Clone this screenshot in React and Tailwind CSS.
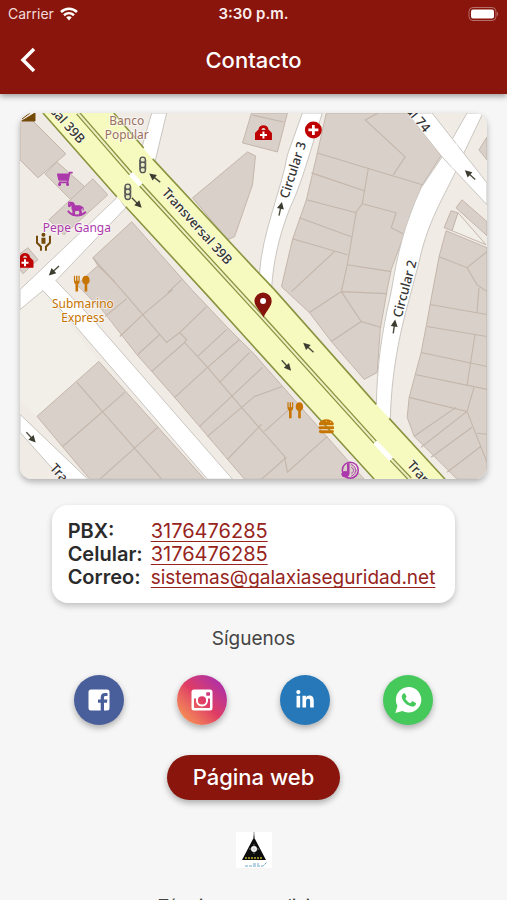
import { FaHamburger, FaHorse, FaLinkedinIn, FaShoppingCart } from 'react-icons/fa';

const buildings = [
  '20,121 30,118 66,154 38,178 20,160',
  '57,162 85,187 72,201 45,174',
  '93,179 108,195 64,235 49,220',
  '20,254 28,248 38,260 23,274 20,270',
  '248,152 256,156 253,185 235,237 228,240 193,198',
  '252,113 288,113 278,152 243,143',
  '132,222 192,290 228,328 255,355 365,480 245,480 175,398 137,355 102,310 77,285 98,266 93,258',
  '99,362 37,417 90,480 205,480',
  '327,113 410,113 442,156 423,185 392,270 388,290 381,330 378,373 365,380 332,342 310,313 282,287 293,240 307,200 318,153',
  '447,231 488,248 488,480 458,480 415,437 408,418 410,398 422,353 427,327 433,294 440,257',
  '463,200 488,222 488,236 457,208',
  '452,211 459,213 453,231 445,228',
  '488,137 480,150 488,160',
];

const walls = [
  'M253 115 284 122',
  // block south of the avenue
  'M93 258 125 294 143 315 167 343 180 333 187 340 185 343 208 368 242 408 285 457 288 473 328 437',
  'M173 290 143 315 120 337M127 299 105 317M182 280 168 293M160 335 138 355M185 343 152 372M207 307 180 333',
  'M227 330 198 357M240 340 208 368 175 398M250 353 220 383M263 368 200 427M283 387 255 397 208 437',
  'M292 408 265 432M262 425 228 460M287 458 262 480M98 266 115 282',
  'M77 383 162 480M125 393 63 447M158 428 100 480',
  // block between the two circulares
  'M379 113 366 120 406 157 394 175M318 153 423 185M369 169 363 204 357 212 348 265 342 292',
  'M312 173 365 191M307 200 357 213M300 218 352 237M293 239 348 255M335 252 292 292',
  'M363 204 397 213 392 228 404 234M348 265 392 272M388 294 342 292 310 313M342 292 362 322 382 328M362 322 332 342',
  // east block
  'M440 257 468 268 488 252M468 268 478 285 488 292M431 305 488 315M428 327 488 337M422 353 488 367M416 375 488 390',
  'M410 398 468 412 488 463M476 335 468 386M475 388 468 412M415 437 457 408M422 448 468 412M432 458 473 428M448 473 482 447M480 288 478 313M478 434 488 435',
];

const streets = [
  'M118 197 20 290V310L43 291 70 320 208 480H233L95 322 56 281 126 208Z',
  'M20 415 88 480H62L20 433Z',
  'M152 113H167L155 163 142 148Z',
  'M303 113H323C311 150 302 185 291 207C280 235 274 260 272 290L260 274C262 235 282 190 288 155Z',
  'M468 113H484L463 157C450 190 430 215 420 262L410 300C400 335 392 375 391 422L377 407C378 365 382 335 392 292C398 255 405 225 422 188L443 157Z',
  'M408 113H433L488 183V205L443 157Z',
];

const arrows = [
  { x: 137, y: 203, angle: 45 },
  { x: 155, y: 178, angle: 218 },
  { x: 54, y: 271, angle: 137 },
  { x: 281, y: 209, angle: -78 },
  { x: 471, y: 175, angle: 222 },
  { x: 31, y: 438, angle: 48 },
  { x: 309, y: 348, angle: 222 },
  { x: 287, y: 366, angle: 48 },
  { x: 395, y: 327, angle: -82 },
];

const streetNames = [
  { text: 'Transversal 39B', x: 198, y: 226, angle: 48, anchor: 'middle' },
  { text: 'sal 39B', x: 83, y: 141, angle: 48, anchor: 'end' },
  { text: 'Tran', x: 411, y: 463, angle: 48, anchor: 'start' },
  { text: 'Tra', x: 53, y: 466, angle: 48, anchor: 'start' },
  { text: 'Circular 3', x: 293, y: 170, angle: -72, anchor: 'middle' },
  { text: 'Circular 2', x: 405, y: 289, angle: -75, anchor: 'middle' },
  { text: 'al 74', x: 429, y: 130, angle: 50, anchor: 'end' },
];

function TrafficLight({ x, y }) {
  return (
    <g transform={`translate(${x} ${y})`} fill="#e9ecc0" stroke="#555" strokeWidth="1.3">
      <circle cy="-5" r="2.7" />
      <circle cy="5" r="2.7" />
      <circle r="2.7" />
      <path d="M-3 -5V5M3 -5V5" strokeWidth="1" />
    </g>
  );
}

function Restaurant({ x, y }) {
  return (
    <g transform={`translate(${x} ${y})`} fill="#c77400">
      <path d="M-8 -8H-6.8V-3H-5.8V-8H-4.4V-3H-3.4V-8H-2.2V-3C-2.2 -1 -3 0 -3.8 .5V8H-6.4V.5C-7.2 0 -8 -1 -8 -3Z" />
      <path d="M4 -8C6.4 -8 7.8 -6 7.8 -3.5C7.8 -1.4 6.8 0 5.4 .7V8H2.8V.7C1.2 0 .3 -1.4 .3 -3.5C.3 -6 1.6 -8 4 -8Z" />
    </g>
  );
}

function MedicalKit({ x, y }) {
  return (
    <g transform={`translate(${x} ${y})`}>
      <path d="M-8.5 7V0L-5 -3.5C-4.5 -9 4.5 -9 5 -3.5L8.5 0V7Z" fill="#bf0000" />
      <path d="M-2 -3C-1.5 -5.5 1.5 -5.5 2 -3Z" fill="#d9d0c9" />
      <path d="M0 -1.5V5.5M-3.5 2H3.5" stroke="#fff" strokeWidth="2" />
    </g>
  );
}

function LocationMap() {
  return (
    <svg
      viewBox="20 113 468 367"
      role="img"
      aria-label="Mapa"
      className="block w-full rounded-xl shadow-[0_3px_6px_rgba(0,0,0,0.28)]"
    >
      <rect x="20" y="113" width="468" height="367" fill="#f0ebe5" />
      <path d="M20 305 43 292 99 362 37 417 20 400Z" fill="#f2efe9" />
      <g fill="#d9d0c9" stroke="#c4b6ab" strokeWidth="1">
        {buildings.map((points) => <polygon key={points} points={points} />)}
      </g>
      <path d="M459 213 487 245 453 231Z" fill="#f2efe9" stroke="#c4b6ab" />
      <g fill="none" stroke="#c4b6ab" strokeWidth="1.1">
        {walls.map((d) => <path key={d} d={d} />)}
      </g>
      <g fill="#fff" stroke="#c9c5c0" strokeWidth="1">
        {streets.map((d) => <path key={d} d={d} />)}
      </g>
      <path d="M446 154 457 143 465 158 454 169Z" fill="#fff" />

      {/* avenue */}
      <path d="M43 113 117 197 207 295 255 348 375 480H446L390 419 377 405 275 290 255 269 152 158 114 113Z" fill="#f7fabf" />
      <g fill="none" stroke="#8b9440" strokeWidth="1.6">
        <path d="M43 113 117 197M126 207 207 295 255 348 375 480" />
        <path d="M114 113 144 148M153 159 255 269 275 290 377 405M390 419 446 480" />
      </g>
      <g fill="none">
        <path d="M78 113 131 174M141 185 264 319 376 443M392 460 411 480" stroke="#8b9440" strokeWidth="4.6" />
        <path d="M78 113 131 174M141 185 264 319 376 443M392 460 411 480" stroke="#eef0c4" strokeWidth="2" />
        <path d="M131 174 141 185M376 443 392 460" stroke="#fff" strokeWidth="5" />
      </g>

      {arrows.map((arrow) => (
        <g key={`${arrow.x}-${arrow.y}`} transform={`translate(${arrow.x} ${arrow.y}) rotate(${arrow.angle})`}>
          <path d="M-7 0H2" stroke="#4b4b3c" strokeWidth="1.4" />
          <path d="M0 -3.5 7 0 0 3.5Z" fill="#3c3c30" />
        </g>
      ))}
      <TrafficLight x={143} y={165} />
      <TrafficLight x={128} y={192} />

      <g fontFamily='"Noto Sans", sans-serif' fontSize="13" fontWeight="500" fill="#333" stroke="#fff" strokeOpacity="0.5" strokeWidth="2" paintOrder="stroke">
        {streetNames.map((s) => (
          <text
            key={`${s.x}-${s.y}`}
            textAnchor={s.anchor}
            dominantBaseline="central"
            transform={`translate(${s.x} ${s.y}) rotate(${s.angle})`}
          >
            {s.text}
          </text>
        ))}
      </g>
      <g fontFamily='"Noto Sans", sans-serif' fontSize="12" textAnchor="middle" stroke="#fff" strokeOpacity="0.6" strokeWidth="2" paintOrder="stroke">
        <text x="127" y="125" fill="#9a7060">Banco</text>
        <text x="127" y="139" fill="#9a7060">Popular</text>
        <text x="77" y="232" fill="#ac39ac">Pepe Ganga</text>
        <text x="83" y="308" fill="#c77400">Submarino</text>
        <text x="83" y="322" fill="#c77400">Express</text>
      </g>

      {/* places */}
      <path d="M22 121 35 113V121ZM22 119 30 113" fill="#734a08" stroke="#734a08" />
      <g transform="translate(128 0) scale(-1 1)">
        <FaShoppingCart x="55" y="171" width="18" height="17" color="#ac39ac" />
      </g>
      <g transform="translate(154 0) scale(-1 1)">
        <FaHorse x="70" y="201" width="14" height="13" color="#ac39ac" />
      </g>
      <path d="M68 211C72 217 81 217 86 212" fill="none" stroke="#ac39ac" strokeWidth="2" />
      <g fill="none" stroke="#734a08" strokeWidth="2">
        <path d="M37 236V243L41 247V251M50 236V243L46 247V251" />
        <path d="M43.5 238V244" strokeWidth="4" />
        <circle cx="43.5" cy="235" r="1" />
      </g>
      <MedicalKit x={25} y={261} />
      <MedicalKit x={264} y={133} />
      <circle cx="314" cy="130" r="8.5" fill="#bf0000" />
      <path d="M314 125V135M309 130H319" stroke="#fff" strokeWidth="2.8" />
      <Restaurant x={82} y={284} />
      <Restaurant x={296} y={411} />
      <FaHamburger x="319" y="419" width="16" height="16" color="#c77400" />
      <g stroke="#ac39ac" fill="none">
        <circle cx="351" cy="471" r="8" strokeWidth="1.5" />
        <path d="M349 464V475" strokeWidth="2.5" />
        <path d="M352 465C358 468 358 474 352 477M352 468C355 470 355 473 352 474" />
        <ellipse cx="346" cy="475" rx="3.5" ry="2.8" fill="#ac39ac" />
      </g>

      <path d="M264 318C261 311 255 307 255 301.5A8.6 8.6 0 0 1 272.2 301.5C272.2 307 267 311 264 318Z" fill="#85120b" />
      <circle cx="263.6" cy="301.5" r="3" fill="#fff" />
    </svg>
  );
}

function FacebookIcon() {
  return (
    <svg viewBox="0 0 24 24" className="size-6" aria-hidden="true">
      <path
        d="M4 1.5H20A2.5 2.5 0 0 1 22.5 4V20A2.5 2.5 0 0 1 20 22.5H17V14.7H20L20.4 11.5H17V9.6C17 8.6 17.4 8.1 18.6 8.1H20.5V5.1C20 5 19.2 5 18 5C15.3 5 13.7 6.5 13.7 9.2V11.5H11V14.7H13.7V22.5H4A2.5 2.5 0 0 1 1.5 20V4A2.5 2.5 0 0 1 4 1.5Z"
        fill="#fff"
      />
    </svg>
  );
}

function InstagramIcon() {
  return (
    <svg viewBox="0 0 24 24" className="size-6" fill="none" aria-hidden="true">
      <path
        fillRule="evenodd"
        d="M4 1.5H20A2.5 2.5 0 0 1 22.5 4V20A2.5 2.5 0 0 1 20 22.5H4A2.5 2.5 0 0 1 1.5 20V4A2.5 2.5 0 0 1 4 1.5ZM4 10.5V19.2Q4 20 4.8 20H19.2Q20 20 20 19.2V10.5H17.9A6.2 6.2 0 1 1 6.1 10.5ZM17 4.2Q16.2 4.2 16.2 5V7Q16.2 7.8 17 7.8H19.2Q20 7.8 20 7V5Q20 4.2 19.2 4.2ZM12 8.3A4.1 4.1 0 1 0 12 16.5A4.1 4.1 0 1 0 12 8.3Z"
        fill="#fff"
      />
    </svg>
  );
}

function WhatsappIcon() {
  return (
    <svg viewBox="0 0 26 26" className="size-7" aria-hidden="true">
      <path d="M13.5 1A11.8 11.8 0 1 1 7.8 23.1L1.2 25L3.2 18.6A11.8 11.8 0 0 1 13.5 1Z" fill="#fff" />
      <path
        d="M8.8 7C9.4 6.5 10.1 6.6 10.4 7.2L11.5 9.7C11.7 10.2 11.5 10.6 10.5 11.7C11.5 13.7 13 15.2 15.2 16.1L16.6 14.5C16.9 14.2 17.2 14.2 17.6 14.4L20 15.6C20.5 15.9 20.5 16.2 20.3 17C19.9 18.6 18.2 19.3 16.6 19.1C12.2 18.3 8.2 14.5 7.3 10.7C7 9.2 7.8 7.8 8.8 7Z"
        fill="#45c95b"
      />
    </svg>
  );
}

const contacts = [
  { label: 'PBX:', value: '3176476285', href: 'tel:3176476285', size: 'text-xl' },
  { label: 'Celular:', value: '3176476285', href: 'tel:3176476285', size: 'text-xl' },
  { label: 'Correo:', value: 'sistemas@galaxiaseguridad.net', href: 'mailto:sistemas@galaxiaseguridad.net', size: 'text-[19px]' },
];

const socials = [
  { name: 'Facebook', color: 'bg-[#495f9b]', icon: <FacebookIcon /> },
  { name: 'Instagram', color: 'bg-linear-45 from-[#f9a34b] via-[#df3b63] to-[#a01bb8]', icon: <InstagramIcon /> },
  { name: 'LinkedIn', color: 'bg-[#2678b8]', icon: <FaLinkedinIn className="size-5" /> },
  { name: 'WhatsApp', color: 'bg-[#45c95b]', icon: <WhatsappIcon /> },
];

function StatusBar() {
  return (
    <div className="grid h-7 grid-cols-3 items-center px-2 text-sm">
      <div className="flex items-center gap-1.5 text-[#f3dcda]">
        Carrier
        <svg viewBox="0 0 18 14" className="h-3.5 w-[18px]" fill="none" stroke="#fff" strokeWidth="2.5" aria-hidden="true">
          <path d="M1 5C5.5 .6 12.5 .6 17 5M4 8.3C7 5.6 11 5.6 14 8.3" />
          <path d="M6.2 10.3C8 8.9 10 8.9 11.8 10.3L9 13.4Z" fill="#fff" stroke="none" />
        </svg>
      </div>
      <div className="text-center text-[15px] font-semibold text-[#fbeeed]">3:30 p.m.</div>
      <svg viewBox="0 0 31 14" className="h-3.5 w-[31px] justify-self-end" aria-hidden="true">
        <rect x="1" y="0.5" width="27" height="13" rx="4" fill="none" stroke="#b5706a" />
        <rect x="3" y="2.5" width="23" height="9" rx="2" fill="#fff" />
        <path d="M29 5C30.5 5.5 30.5 8.5 29 9Z" fill="#b5706a" />
      </svg>
    </div>
  );
}

export default function App() {
  return (
    <div className="flex h-screen flex-col bg-[#f6f6f6] font-['Inter',sans-serif] text-[#2b2b2b]">
      <header className="relative shrink-0 bg-[#89150c] text-white shadow-[0_2px_6px_rgba(0,0,0,0.4)]">
        <StatusBar />
        <div className="grid h-[66px] grid-cols-3 items-center px-4 pb-0.5">
          <button type="button" aria-label="Volver" className="flex size-6 items-center justify-center">
            <svg viewBox="0 0 16 26" className="h-[26px] w-4" fill="none" stroke="#fff" strokeWidth="3.5" aria-hidden="true">
              <path d="M14 2 3 13 14 24" />
            </svg>
          </button>
          <h1 className="text-center text-[22px] font-medium">Contacto</h1>
        </div>
      </header>

      <main className="flex min-h-0 flex-1 flex-col items-center overflow-y-auto px-5 pt-[19px] [scrollbar-width:none]">
        <div className="w-full shrink-0">
          <LocationMap />
        </div>

        <dl className="mt-[26px] grid shrink-0 grid-cols-[auto_auto] gap-x-2 rounded-2xl bg-white pt-[15px] pr-5 pb-3.5 pl-4 text-xl leading-[23px] shadow-[0_3px_6px_rgba(0,0,0,0.22)]">
          {contacts.map((c) => (
            <div key={c.label} className="contents">
              <dt className="font-semibold">{c.label}</dt>
              <dd className={`leading-[23px] ${c.size}`}>
                <a href={c.href} className="text-[#96241c] underline decoration-1 underline-offset-3 [text-decoration-skip-ink:none]">
                  {c.value}
                </a>
              </dd>
            </div>
          ))}
        </dl>

        <h2 className="mt-[22px] shrink-0 text-[19px] leading-7 text-[#444]">Síguenos</h2>

        <div className="mt-[22px] flex w-full shrink-0 justify-around px-7">
          {socials.map((s) => (
            <a
              key={s.name}
              href="#"
              aria-label={s.name}
              className={`flex size-[50px] items-center justify-center rounded-full text-white shadow-[0_3px_6px_rgba(0,0,0,0.3)] ${s.color}`}
            >
              {s.icon}
            </a>
          ))}
        </div>

        <a
          href="#"
          className="mt-[30px] shrink-0 rounded-full bg-[#89150c] px-[26px] py-1.5 text-[22px] leading-[33px] font-medium text-white shadow-[0_3px_6px_rgba(0,0,0,0.3)]"
        >
          Página web
        </a>

        <svg viewBox="0 0 36 36" role="img" aria-label="Galaxia Seguridad" className="mt-8 size-9 shrink-0">
          <rect width="36" height="36" fill="#fff" />
          <path d="M18 2 19 7 30 28H6L17 7Z" fill="#0c0c0c" />
          <path d="M18 0V7" stroke="#999" />
          <circle cx="18" cy="17" r="3" fill="#fff" />
          <path d="M18 12V22M13 17H23" stroke="#bbb" strokeWidth="0.6" />
          <path d="M9 26H27" stroke="#8f8524" strokeWidth="2" strokeDasharray="2 1" />
          <path d="M9 34H27L31 30M17 32H23" fill="none" stroke="#6aa6c8" strokeWidth="1" strokeDasharray="3 1" />
        </svg>

        <a href="#" className="mt-6 shrink-0 pb-6 text-[17px] leading-7 text-[#444]">Términos y condiciones</a>
      </main>
    </div>
  );
}
